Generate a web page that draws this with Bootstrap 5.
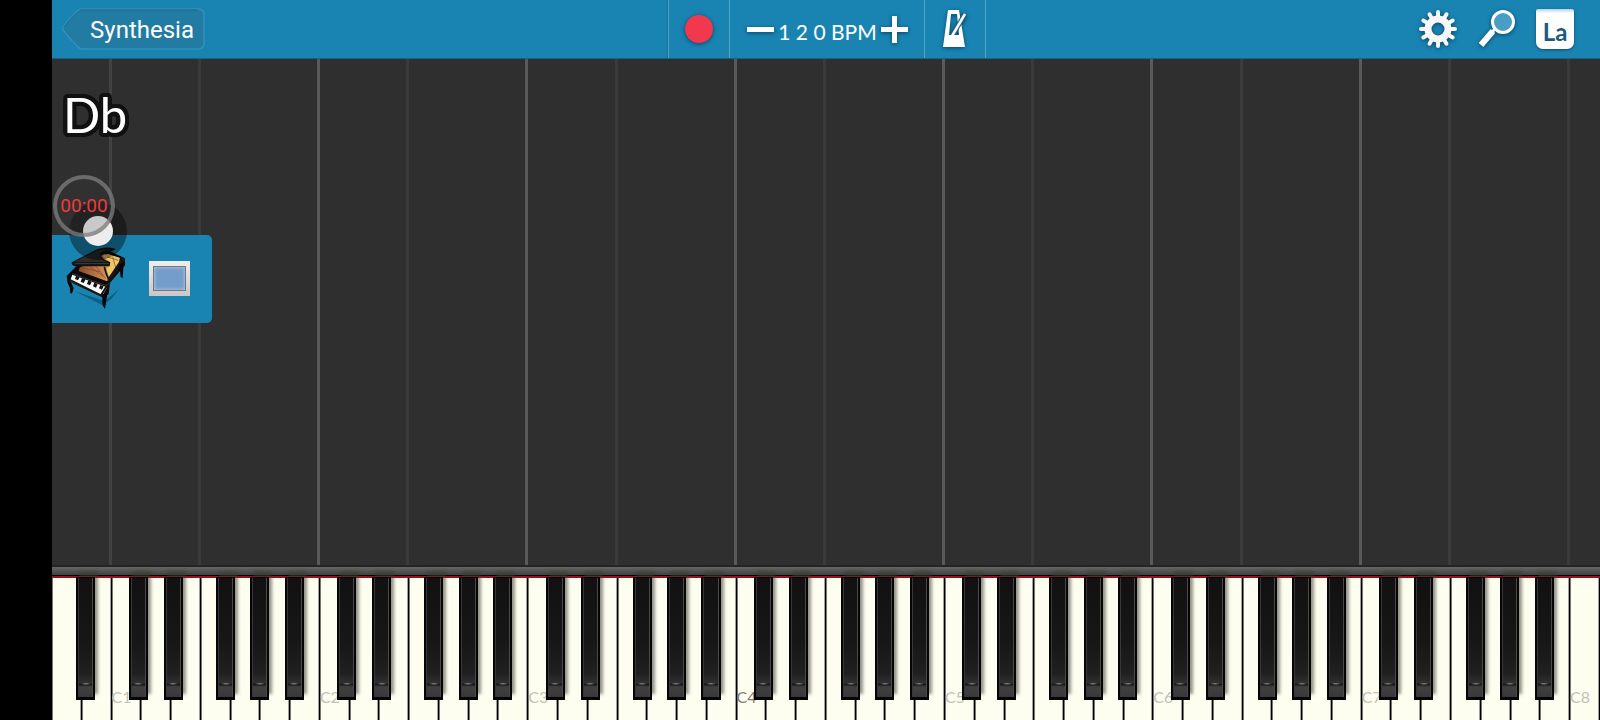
<!DOCTYPE html>
<html lang="en">
<head>
<meta charset="utf-8">
<meta name="viewport" content="width=device-width, initial-scale=1">
<title>Synthesia</title>
<link href="https://cdn.jsdelivr.net/npm/bootstrap@5.3.0/dist/css/bootstrap.min.css" rel="stylesheet">
<style>
  body { background: #000; font-family: Lato, sans-serif; padding-left: 52px; }
  button { border: 0; padding: 0; background: none; color: inherit; }
  svg { display: block; overflow: visible; }

  .topbar { display: grid; grid-template-columns: 1fr auto 1fr; height: 59px; padding-left: 2px; background: #1984b2; border-bottom: 1px solid #126488; color: #fff; }
  .back-btn { position: relative; width: 144px; height: 42px; margin: 8px 0 0 7px; padding-left: 18px; font: 24px/44px Roboto, sans-serif; }
  .back-btn svg { position: absolute; inset: 0; z-index: 0; }
  .back-btn span { position: relative; }
  .tools { border-left: 1px solid #55a5c6; box-shadow: -1px 0 #14709a; }
  .tool { width: 61px; border-right: 1px solid #55a5c6; }
  .tempo { width: 195px; border-right: 1px solid #55a5c6; padding: 0 16px 0 17px; }
  .bpm { font-size: 21px; line-height: 26px; padding-top: 5px; }
  .shade { filter: drop-shadow(0 1px 2px rgba(0, 40, 70, .7)); }
  .actions { gap: 21px; padding-right: 26px; }
  .la-btn { width: 38px; height: 40px; border-radius: 2px 2px 7px 7px; background: linear-gradient(#a9d3e6, #fff 4px); color: #1d5a7c; font: bold 24px/46px Lato, sans-serif; box-shadow: 0 1px 3px rgba(0, 40, 70, .6); }

  .stage { background: #2f2f2f; }
  .lane { flex: 1 1 0; box-shadow: inset -3px 0 #3b3b3b; }
  .lane.octave { box-shadow: inset -3px 0 #595959; }
  .lane.edge { box-shadow: inset -3px 0 #424242; }
  .overlay { position: absolute; inset: 0; }
  .chord { font-size: 49px; line-height: 60px; color: #fff; padding: 25px 0 0 11px;
    text-shadow: 4px 0 #111, -4px 0 #111, 0 4px #111, 0 -4px #111, 3px 3px #111, -3px 3px #111, 3px -3px #111, -3px -3px #111, 2px 4px #111, -2px 4px #111, 2px -4px #111, -2px -4px #111, 4px 2px #111, -4px 2px #111, 4px -2px #111, -4px -2px #111; }
  .parts { width: 160px; height: 88px; margin-top: 91px; padding: 0 22px 2px 14px; border-radius: 0 5px 5px 0; background: #1984b2; }
  .screen-btn { width: 41px; height: 35px; padding: 4px; background: linear-gradient(#eee, #c8c8c8); }
  .screen-btn span { display: block; height: 25px; border: 1px solid #777; background: #749dcc; box-shadow: inset 0 0 3px 1px #a5bfdf; }
  .recorder { position: absolute; left: 1px; top: 116px; width: 75px; height: 84px; }
  .knob { position: absolute; left: 16px; top: 27px; width: 58px; height: 58px; border-radius: 50%; background: rgba(0, 0, 0, .4); }
  .knob::after { content: ""; position: absolute; inset: 14px; border-radius: 50%; background: #ededed; }
  .timer { position: absolute; left: 0; top: 0; width: 62px; height: 62px; border: 4px solid rgba(125, 125, 125, .75); border-radius: 50%; color: #ee3a3f; font: 19px/54px Roboto, sans-serif; text-align: center; background: rgba(60, 60, 60, .2); white-space: nowrap; }

  .rail { height: 13px; background: linear-gradient(#242424 0 2px, #666 2px, #414141 10px, #000 10px 11px, #9c0e1c 11px); }
  .keys { height: 142px; }
  .key { position: relative; flex: 1 1 0; min-width: 0; }
  .ivory { width: 100%; height: 100%; background: #fdfdf0; box-shadow: inset -1px 0 #000, inset -2px 0 #a2a298, inset 1px 0 #77776f; font-size: 16px; line-height: 20px; color: #c2c2b6; text-align: left; padding: 95px 0 0; }
  .ivory.middle { color: #7c7c73; }
  .ebony { position: absolute; z-index: 1; top: -1px; width: 64%; height: 123px; border: solid #050505; border-width: 1px 2px 3px; box-shadow: 3px -6px 3px rgba(60, 60, 50, .55);
    background: radial-gradient(ellipse at 50% 0, #777 0 1px, transparent 5px) 50% 105px / 12px 3px no-repeat, linear-gradient(90deg, #383838 0 1px, transparent 1px calc(100% - 1px), #4a4a4a calc(100% - 1px)), linear-gradient(#111 0, #171717 55%, #202020 80%, #303030 105px, #111 106px, #404040 109px, #383838); }
  .sharp-c { left: 58%; } .sharp-d { left: 76%; } .sharp-f { left: 51%; } .sharp-g { left: 66%; } .sharp-a { left: 82%; }
</style>
</head>
<body>
<div class="d-flex flex-column vh-100 overflow-hidden">
  <header class="topbar flex-shrink-0">
    <div>
      <button class="back-btn text-center" type="button">
        <svg width="144" height="42" viewBox="0 0 144 42"><path d="M20 1H137Q143 1 143 7V35Q143 41 137 41H20Q16 39 2 22Q1 21 2 19Q14 4 20 1Z" fill="#227ba3" stroke="#3290b9" stroke-width="1.5"/><path d="M3 19Q14 5 20 2H137" fill="none" stroke="#176b93"/></svg>
        <span>Synthesia</span>
      </button>
    </div>
    <div class="tools d-flex">
      <button class="tool d-flex align-items-center justify-content-center" type="button" aria-label="Record">
        <svg class="shade" width="28" height="28" viewBox="0 0 28 28"><circle cx="14" cy="14" r="14" fill="#f1384c"/></svg>
      </button>
      <div class="tempo d-flex align-items-center justify-content-between">
        <button class="shade" type="button" aria-label="Slower"><svg width="27" height="27" viewBox="0 0 27 27"><path d="M0 11H27V16H0Z" fill="#fff"/></svg></button>
        <span class="bpm">1 2 0 BPM</span>
        <button class="shade" type="button" aria-label="Faster"><svg width="27" height="27" viewBox="0 0 27 27"><path d="M11 0h5v11h11v5H16v11h-5V16H0v-5h11Z" fill="#fff"/></svg></button>
      </div>
      <button class="tool d-flex align-items-center justify-content-center" type="button" aria-label="Metronome">
        <svg class="shade" width="24" height="38" viewBox="0 0 24 38"><path fill="#fff" fill-rule="evenodd" d="M5 0H16L22 37H0ZM8 4L6 25H16L14 4Z"/><path d="M22 4L9 26" stroke="#1c6385" stroke-width="5"/><path d="M5 25H17L18 30H4Z" fill="#fff"/><path d="M22 4L9 26" stroke="#fff" stroke-width="2.500"/></svg>
      </button>
    </div>
    <div class="actions d-flex justify-content-end align-items-center">
      <button type="button" aria-label="Settings">
        <svg class="shade" width="38" height="38" viewBox="-19 -19 38 38"><circle r="10" fill="none" stroke="#f7f7f7" stroke-width="7"/><g stroke="#f7f7f7" stroke-width="4" stroke-linecap="round"><path d="M0-12V-17M0 12V17M-12 0H-17M12 0H17"/><path d="M0-12V-17M0 12V17M-12 0H-17M12 0H17" transform="rotate(30)"/><path d="M0-12V-17M0 12V17M-12 0H-17M12 0H17" transform="rotate(60)"/></g></svg>
      </button>
      <button type="button" aria-label="Zoom">
        <svg class="shade" width="37" height="38" viewBox="0 0 37 38"><path d="M15 21L3 35" stroke="#fff" stroke-width="6"/><path d="M13 23L19 17" stroke="#fff" stroke-width="3"/><circle cx="25" cy="12" r="10.500" fill="#499ec5" stroke="#fff" stroke-width="3"/></svg>
      </button>
      <button class="la-btn" type="button">La</button>
    </div>
  </header>

  <main class="stage position-relative flex-grow-1">
    <div class="d-flex h-100" id="lanes"></div>
    <div class="overlay">
      <div class="chord">Db</div>
      <div class="parts d-flex align-items-center justify-content-between">
        <button type="button" aria-label="Grand piano">
          <svg width="60" height="64" viewBox="80 260 180 192">
            <defs><linearGradient id="wood"><stop offset="0" stop-color="#8a4a2a"/><stop offset=".6" stop-color="#c98a52"/><stop offset="1" stop-color="#f2cf70"/></linearGradient></defs>
            <path d="M105 395L195 425L240 390L215 420L190 438Z" fill="#0c5f82"/>
            <path d="M82 350L120 312L200 270L257 297V318L212 370L208 405L190 414L86 365Z" fill="#0c0908"/>
            <path d="M121 325L195 284L242 296L238 315L203 366L118 335Z" fill="url(#wood)"/>
            <path d="M190 290L206 284L240 295L234 318L204 362L200 332L212 316V308Z" fill="#efc765"/>
            <path d="M128 326L182 337M152 322L190 350M170 321L198 357M200 330L208 355M204 293L237 303M220 292L229 325" stroke="#7f4226" stroke-width="2"/>
            <path d="M195 322Q201 350 210 362" stroke="#151010" stroke-width="5" fill="none"/>
            <path d="M204 360L241 305L242 292L257 298L210 373Z" fill="#171514"/>
            <path d="M97 309L177 268Q218 260 229 270Q215 279 193 281Q177 287 194 300L213 309L211 321L108 321Q96 319 97 309Z" fill="#111"/>
            <path d="M101 309L178 272L224 269L190 276Q174 286 187 300L205 309Z" fill="#2b2b2b"/>
            <path d="M106 313L209 313" stroke="#555" stroke-width="2"/>
            <path d="M99 346L203 384L189 410L92 365Z" fill="#f8f8f8"/>
            <path d="M110 349L121 353L116 363L107 359M128 356L139 360L133 371L124 367M147 363L157 367L152 378L143 374M165 370L175 374L170 385L161 381M183 377L193 381L188 391L179 387" fill="#111"/>
            <path d="M88 360L185 408L206 374" fill="none" stroke="#151515" stroke-width="6"/>
            <path d="M82 350L86 362L95 369L103 386L98 403L92 400V386L85 371M188 404L204 405L197 449L190 438ZM240 315L253 311L250 356L244 353Z" fill="#070707"/>
            <path d="M98 343L202 379L210 370" fill="none" stroke="#45494b" stroke-width="2"/>
          </svg>
        </button>
        <button class="screen-btn" type="button" aria-label="Display"><span></span></button>
      </div>
    </div>
    <div class="recorder">
      <div class="knob"></div>
      <div class="timer">00:00</div>
    </div>
  </main>
  <div class="rail flex-shrink-0"></div>
  <div class="keys d-flex flex-shrink-0" id="keys"></div>
</div>
<script src="https://cdn.jsdelivr.net/npm/bootstrap@5.3.0/dist/js/bootstrap.bundle.min.js"></script>
<script>
  // An 88-key keyboard: 52 white keys from A0 to C8.
  const keys = document.getElementById('keys');
  for (let i = 0; i < 52; i++) {
    const note = 'ABCDEFG'[i % 7];
    const octave = Math.floor((i + 5) / 7);
    const key = document.createElement('div');
    key.className = 'key';
    const white = document.createElement('button');
    white.type = 'button';
    white.className = 'ivory d-block' + (note === 'C' && octave === 4 ? ' middle' : '');
    if (note === 'C') white.textContent = note + octave;
    else white.setAttribute('aria-label', note + octave);
    key.append(white);
    if ('CDFGA'.includes(note) && i < 51) {
      const black = document.createElement('button');
      black.type = 'button';
      black.className = 'ebony sharp-' + note.toLowerCase();
      black.setAttribute('aria-label', note + ' sharp ' + octave);
      key.append(black);
    }
    keys.append(key);
  }

  // Guide lines fall before each C and F; a lane spans that many white keys.
  const lanes = document.getElementById('lanes');
  const spans = [2, ...Array(7).fill([3, 4]).flat(), 1];
  spans.forEach((span, i) => {
    const lane = document.createElement('div');
    lane.className = 'lane' + (i === 0 ? ' edge' : i % 2 === 0 && i < 14 ? ' octave' : '');
    if (i === spans.length - 1) lane.classList.add('shadow-none');
    lane.style.flexGrow = span;
    lanes.append(lane);
  });
</script>
</body>
</html>
